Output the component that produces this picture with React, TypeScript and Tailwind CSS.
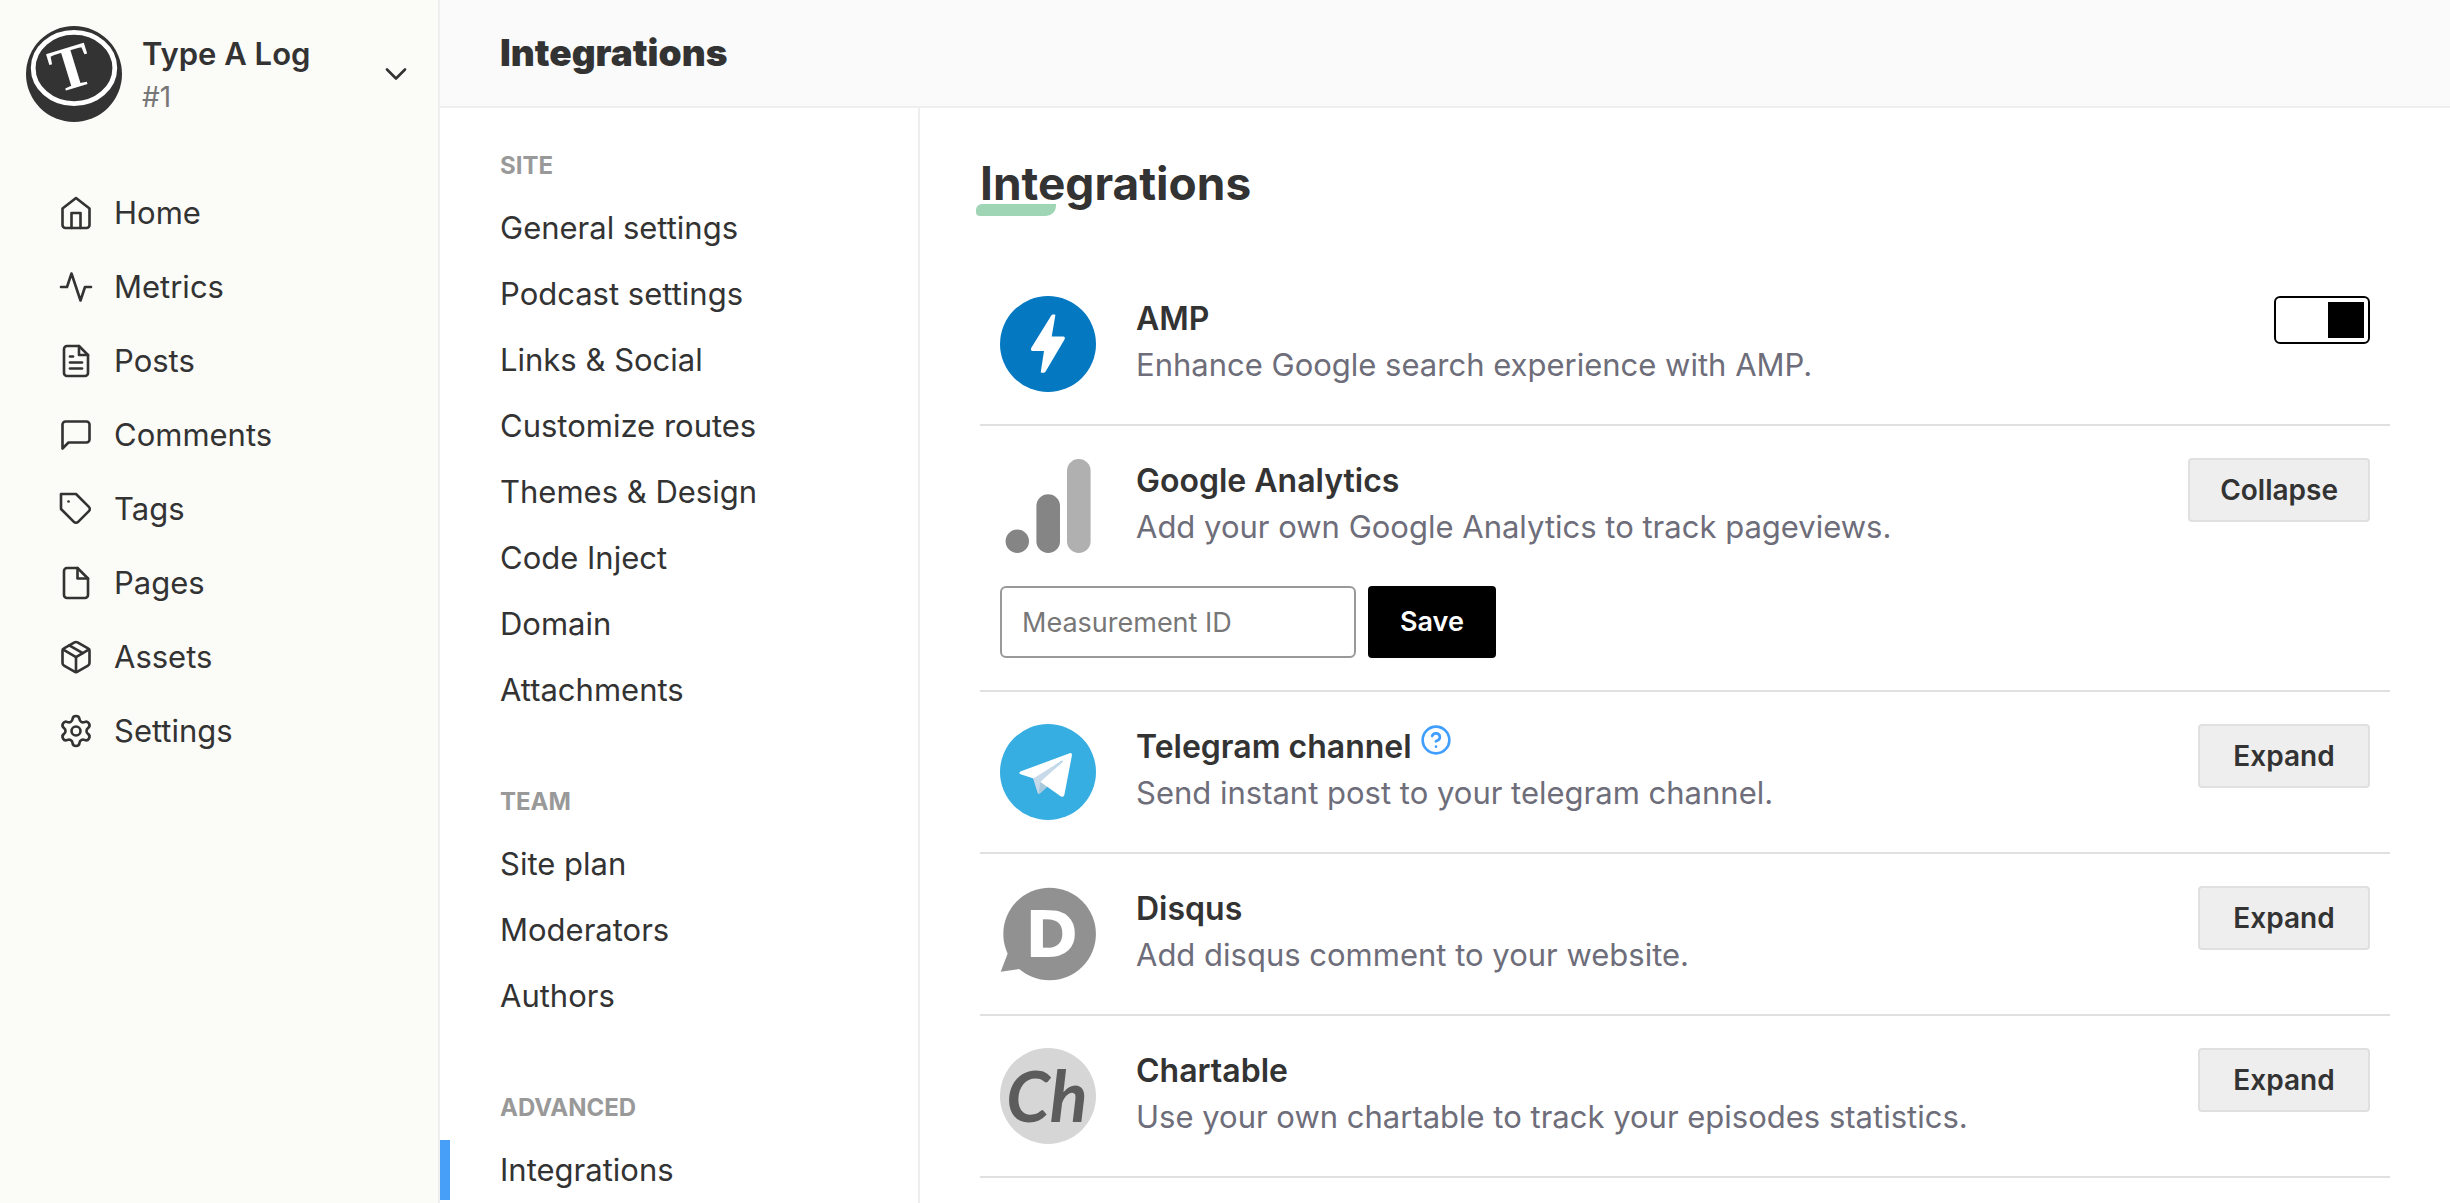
import React, { useState } from "react";
import { Settings } from "lucide-react";
import {
  FiActivity,
  FiChevronDown,
  FiFile,
  FiFileText,
  FiHelpCircle,
  FiHome,
  FiMessageSquare,
  FiPackage,
  FiTag,
} from "react-icons/fi";

const mainNav = [
  { title: "Home", icon: FiHome },
  { title: "Metrics", icon: FiActivity },
  { title: "Posts", icon: FiFileText },
  { title: "Comments", icon: FiMessageSquare },
  { title: "Tags", icon: FiTag },
  { title: "Pages", icon: FiFile },
  { title: "Assets", icon: FiPackage },
  { title: "Settings", icon: Settings },
];

const settingsNav = [
  {
    title: "SITE",
    items: [
      "General settings",
      "Podcast settings",
      "Links & Social",
      "Customize routes",
      "Themes & Design",
      "Code Inject",
      "Domain",
      "Attachments",
    ],
  },
  { title: "TEAM", items: ["Site plan", "Moderators", "Authors"] },
  { title: "ADVANCED", items: ["Integrations"] },
];

const SiteLogo = () => (
  <svg viewBox="0 0 96 96" className="size-24 shrink-0" aria-hidden="true">
    <circle cx="48" cy="48" r="48" fill="#333333" />
    <ellipse
      cx="48"
      cy="42"
      rx="40.8"
      ry="35.6"
      fill="none"
      stroke="#ffffff"
      strokeWidth="4.8"
    />
    <text
      x="45"
      y="62"
      textAnchor="middle"
      transform="rotate(-17 45 42)"
      fill="#ffffff"
      className="font-['Liberation_Serif',serif] text-[62px] font-bold"
    >
      T
    </text>
  </svg>
);

const AmpLogo = () => (
  <svg viewBox="0 0 96 96" className="size-24 shrink-0" aria-hidden="true">
    <circle cx="48" cy="48" r="48" fill="#0479c2" />
    <path
      d="M51.3 19.4Q51.8 18.6 53 18.6H54.6Q55.5 18.6 55.3 19.6L51.7 40.6H63.2Q65.6 40.8 64.5 43.4L45.6 75.6Q44.9 76.8 43.6 76.8H41.6Q40.7 76.8 40.8 75.8L44 55H32.4Q30.4 54.6 31.2 52Z"
      fill="#ffffff"
    />
  </svg>
);

const AnalyticsLogo = () => (
  <svg viewBox="0 0 96 96" className="size-24 shrink-0" aria-hidden="true">
    <rect x="67" y="1" width="23.6" height="94" rx="11.8" fill="#b0b0b0" />
    <rect x="36.4" y="36.2" width="23.6" height="58.8" rx="11.8" fill="#858585" />
    <circle cx="17.3" cy="83.3" r="11.7" fill="#858585" />
  </svg>
);

const TelegramLogo = () => (
  <svg viewBox="0 0 96 96" className="size-24 shrink-0" aria-hidden="true">
    <circle cx="48" cy="48" r="48" fill="#37aee2" />
    <path d="M33 54L38 69.8Q39.4 70 41 68.4L48 62L56 40Z" fill="#c8daea" />
    <path d="M40.2 57.6L38.4 69.9Q39.6 69.9 41 68.4L47 62.6Z" fill="#a9c9dd" />
    <path
      d="M20.4 47.6L69.6 29.2Q72.4 28.6 71.9 31.6L64.4 70.8Q63.6 74 60.6 72.2L40.2 57.8L62.4 37.8Q63.4 36.4 61.6 37L33.6 54.4L20.6 50.2Q18.2 49 20.4 47.6Z"
      fill="#ffffff"
    />
    <path d="M33.6 54.4L61.6 37Q63.4 36.4 62.4 37.8L40.2 57.8L38.4 69.8Z" fill="#c8daea" />
  </svg>
);

const DisqusLogo = () => (
  <svg viewBox="0 0 96 96" className="size-24 shrink-0" aria-hidden="true">
    <circle cx="49.6" cy="48" r="46.3" fill="#919191" />
    <path d="M7.7 67.4L0.7 85.8L21.4 82.8Z" fill="#919191" />
    <text
      x="25"
      y="71"
      fill="#ffffff"
      className="font-['DejaVu_Sans',sans-serif] text-[64px] font-bold"
    >
      D
    </text>
  </svg>
);

const ChartableLogo = () => (
  <svg viewBox="0 0 96 96" className="size-24 shrink-0" aria-hidden="true">
    <circle cx="48" cy="48" r="48" fill="#d6d6d6" />
    <text
      x="47"
      y="74"
      textAnchor="middle"
      fill="#5c5c5c"
      className="font-['Lato',cursive] text-[70px] font-bold italic"
    >
      Ch
    </text>
  </svg>
);

const ToggleButton = ({
  open,
  onClick,
}: {
  open: boolean;
  onClick: () => void;
}) => (
  <button
    type="button"
    aria-expanded={open}
    onClick={onClick}
    className="h-16 min-w-[172px] shrink-0 rounded-sm border-2 border-[#e0e0e0] bg-[#eeeeee] px-[30px] text-[28px] font-semibold"
  >
    {open ? "Collapse" : "Expand"}
  </button>
);

const IntegrationRow = ({
  logo,
  title,
  content,
  help,
  action,
  children,
}: {
  logo: React.ReactNode;
  title: string;
  content: string;
  help?: boolean;
  action: React.ReactNode;
  children?: React.ReactNode;
}) => (
  <li className="flex flex-col gap-8 border-b-2 border-[#e0e0e0] px-5 py-8">
    <div className="flex items-start gap-10">
      {logo}
      <div className="min-w-0 flex-1">
        <div className="flex items-start gap-2">
          <h3 className="text-[32px] leading-[46px] font-semibold">{title}</h3>
          {help && (
            <a href="#help" aria-label={`${title} help`} className="text-[#409eff]">
              <FiHelpCircle size={32} />
            </a>
          )}
        </div>
        <p className="text-[31px] leading-[46px] text-[#6e6d7a]">{content}</p>
      </div>
      {action}
    </div>
    {children}
  </li>
);

const others = [
  {
    title: "Telegram channel",
    content: "Send instant post to your telegram channel.",
    logo: <TelegramLogo />,
    help: true,
  },
  {
    title: "Disqus",
    content: "Add disqus comment to your website.",
    logo: <DisqusLogo />,
  },
  {
    title: "Chartable",
    content: "Use your own chartable to track your episodes statistics.",
    logo: <ChartableLogo />,
  },
];

export default function App() {
  const [amp, setAmp] = useState(true);
  const [analyticsOpen, setAnalyticsOpen] = useState(true);
  const [opened, setOpened] = useState("");

  return (
    <div className="flex min-h-screen bg-white font-['Inter',sans-serif] text-[#333333]">
      <aside className="w-[440px] shrink-0 border-r-2 border-[#eeeeee] bg-[#fbfbf7]">
        <button
          type="button"
          className="flex w-full items-center gap-5 py-[26px] pr-6 pl-[26px] text-left"
        >
          <SiteLogo />
          <span className="flex flex-1 flex-col">
            <span className="text-[31px] leading-[46px] font-semibold">
              Type A Log
            </span>
            <span className="text-[28px] leading-10 text-[#777777]">#1</span>
          </span>
          <FiChevronDown size={36} strokeWidth={1.75} />
        </button>

        <nav aria-label="Main" className="mt-7 pl-[58px]">
          {mainNav.map(({ title, icon: Icon }) => (
            <a
              key={title}
              href={`#${title.toLowerCase()}`}
              className="flex h-[74px] items-center gap-5 text-[31px]"
            >
              <Icon size={36} strokeWidth={1.75} />
              {title}
            </a>
          ))}
        </nav>
      </aside>

      <div className="flex min-w-0 flex-1 flex-col">
        <header className="flex h-[108px] items-center border-b-2 border-[#eeeeee] bg-[#fafafa] px-[60px]">
          <h1 className="text-[37px] font-black">Integrations</h1>
        </header>

        <div className="flex flex-1">
          <nav
            aria-label="Settings"
            className="flex w-[480px] shrink-0 flex-col gap-16 border-r-2 border-[#eeeeee] pt-10"
          >
            {settingsNav.map((group) => (
              <section key={group.title}>
                <h2 className="mb-[14px] pl-[60px] text-2xl leading-9 font-bold text-[#999999]">
                  {group.title}
                </h2>
                <ul className="flex flex-col gap-[6px]">
                  {group.items.map((item) => (
                    <li key={item}>
                      <a
                        href="#settings"
                        className={
                          item === "Integrations"
                            ? "flex h-[60px] items-center border-l-10 border-[#479ff8] pl-[50px] text-[31px]"
                            : "flex h-[60px] items-center pl-[60px] text-[31px]"
                        }
                      >
                        {item}
                      </a>
                    </li>
                  ))}
                </ul>
              </section>
            ))}
          </nav>

          <main className="min-w-0 flex-1 px-[60px] pt-11">
            <h2 className="relative isolate w-fit pb-[2px] text-[46px] leading-[62px] font-bold">
              <span className="absolute -left-1 bottom-0 -z-10 h-3 w-20 rounded-tl-md rounded-br-[10px] rounded-bl-sm bg-[#9fd5b5]" />
              Integrations
            </h2>

            <ul className="mt-12">
              <IntegrationRow
                logo={<AmpLogo />}
                title="AMP"
                content="Enhance Google search experience with AMP."
                action={
                  <button
                    type="button"
                    role="switch"
                    aria-checked={amp}
                    aria-label="AMP"
                    onClick={() => setAmp(!amp)}
                    className={
                      amp
                        ? "flex h-12 w-24 shrink-0 items-center justify-end rounded-md border-2 border-black px-1"
                        : "flex h-12 w-24 shrink-0 items-center rounded-md border-2 border-black px-1"
                    }
                  >
                    <span className="size-9 bg-black" />
                  </button>
                }
              />
              <IntegrationRow
                logo={<AnalyticsLogo />}
                title="Google Analytics"
                content="Add your own Google Analytics to track pageviews."
                action={
                  <ToggleButton
                    open={analyticsOpen}
                    onClick={() => setAnalyticsOpen(!analyticsOpen)}
                  />
                }
              >
                {analyticsOpen && (
                  <form
                    className="flex gap-3"
                    onSubmit={(e) => e.preventDefault()}
                  >
                    <input
                      type="text"
                      aria-label="Measurement ID"
                      placeholder="Measurement ID"
                      className="h-[72px] w-[356px] rounded-md border-2 border-[#999999] px-5 text-[27px] placeholder:text-[#777777]"
                    />
                    <button
                      type="submit"
                      className="h-[72px] rounded-sm bg-black px-8 text-[27px] font-semibold text-white"
                    >
                      Save
                    </button>
                  </form>
                )}
              </IntegrationRow>
              {others.map((item) => (
                <IntegrationRow
                  key={item.title}
                  {...item}
                  action={
                    <ToggleButton
                      open={opened === item.title}
                      onClick={() =>
                        setOpened(opened === item.title ? "" : item.title)
                      }
                    />
                  }
                />
              ))}
            </ul>
          </main>
        </div>
      </div>
    </div>
  );
}
